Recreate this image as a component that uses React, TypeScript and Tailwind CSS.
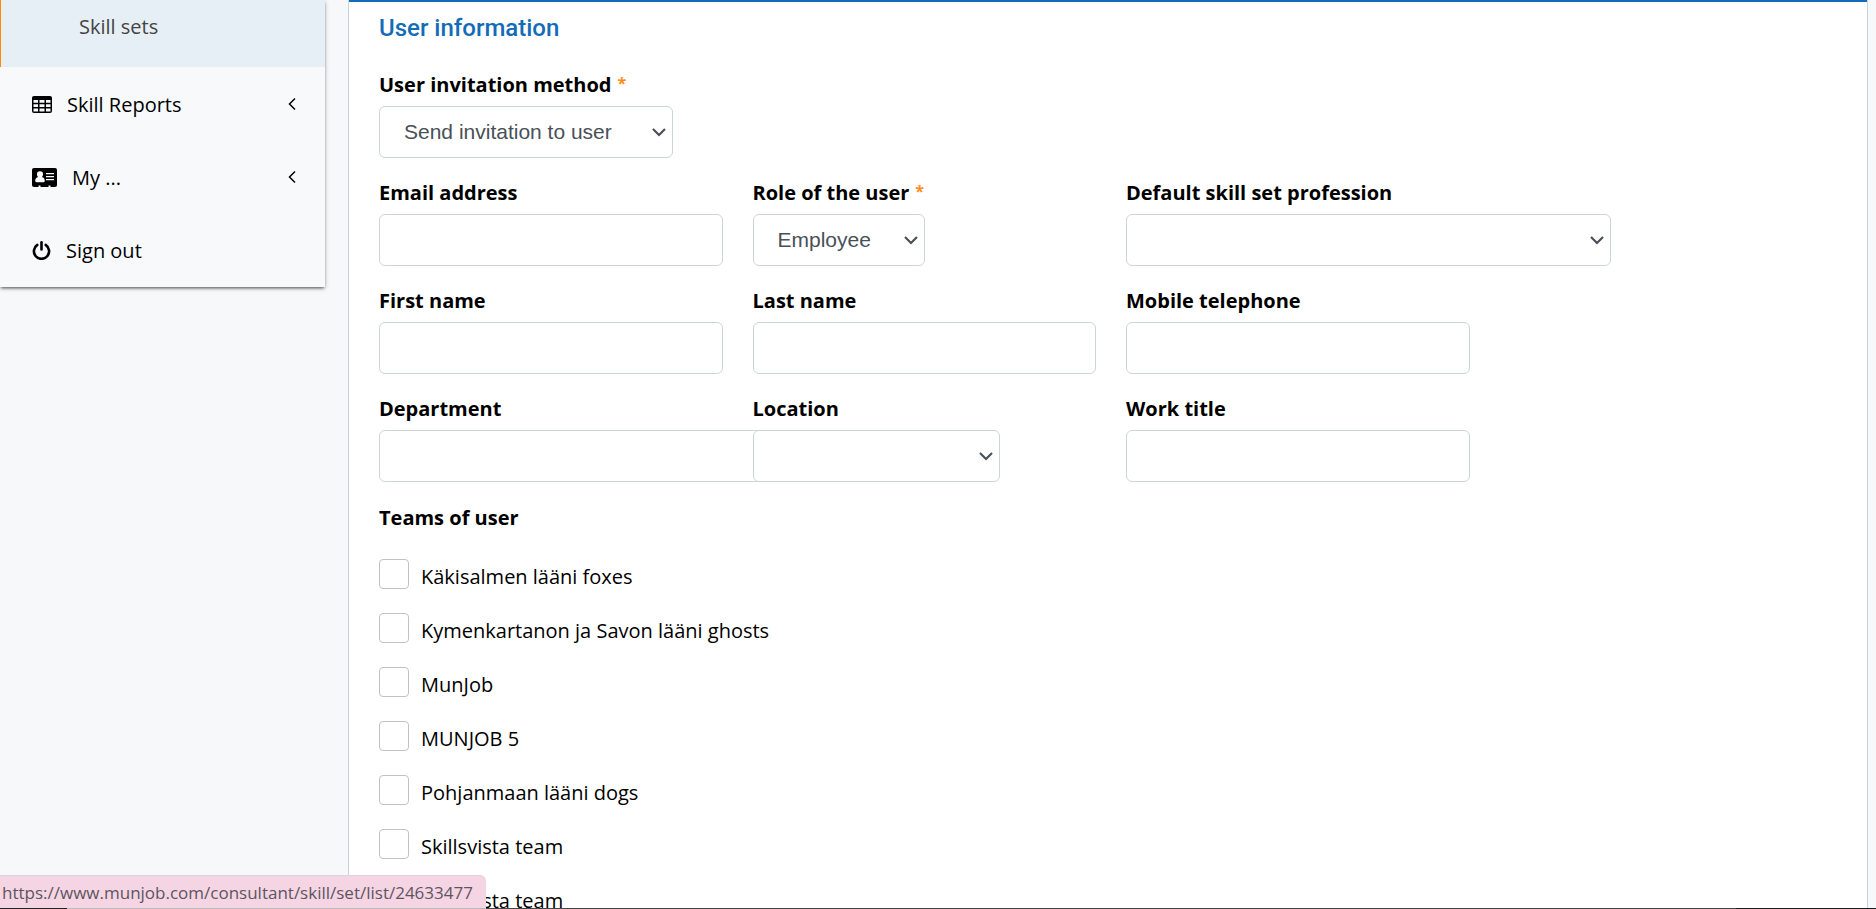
import type { ReactNode } from "react"

const teams = [
  "Käkisalmen lääni foxes",
  "Kymenkartanon ja Savon lääni ghosts",
  "MunJob",
  "MUNJOB 5",
  "Pohjanmaan lääni dogs",
  "Skillsvista team",
  "Skillsvista team",
]

const boxStyle = "h-[52px] rounded-md border border-[#ced4da] bg-white"

function TableIcon() {
  return (
    <svg className="h-[17px] w-5" viewBox="0 0 20 17">
      <rect width="20" height="17" rx="2" fill="black" />
      <g fill="#f7f9fb">
        <path d="M1.5 4h4.5v2.7H1.5zM7.5 4h5v2.7h-5zM14 4h4.5v2.7H14z" />
        <path d="M1.5 8.2h4.5v2.7H1.5zM7.5 8.2h5v2.7h-5zM14 8.2h4.5v2.7H14z" />
        <path d="M1.5 12.4h4.5v3H1.5zM7.5 12.4h5v3h-5zM14 12.4h4.5v3H14z" />
      </g>
    </svg>
  )
}

function CardIcon() {
  return (
    <svg className="h-[19px] w-[25px]" viewBox="0 0 25 19">
      <rect width="25" height="19" rx="2" fill="black" />
      <g fill="#f7f9fb">
        <path d="M8 3.2a3 3 0 0 1 3 3.2c0 1.1-.5 2-1.1 2.6 1.8.3 2.9 1.8 2.9 3.8 0 .8-.5 1.4-1.2 1.4H4.400c-.7 0-1.200-.6-1.200-1.400 0-2 1.100-3.500 2.900-3.800A3.500 3.500 0 0 1 5 6.400 3 3 0 0 1 8 3.200z" />
        <path d="M14 5h8v1.300h-8zM14 8h8v1.300h-8zM14 11h8v1.300h-8z" />
        <path d="M6.500 17.500h2V19h-2zM16.500 17.500h2V19h-2z" />
      </g>
    </svg>
  )
}

function PowerIcon() {
  return (
    <svg className="size-[19px]" viewBox="0 0 19 19" fill="none" stroke="black" strokeWidth="2.6" strokeLinecap="round">
      <path d="M5.300 3.900a7.600 7.600 0 1 0 8.400 0" />
      <path d="M9.500 1.400v7" />
    </svg>
  )
}

interface FieldProps {
  id: string
  label: string
  required?: boolean
  children: ReactNode
}

function Field({ id, label, required, children }: FieldProps) {
  return (
    <div>
      <label htmlFor={id} className="mb-1.5 flex gap-1.5 font-bold leading-[30px]">
        {label}
        {required && <span className="text-base leading-[26px] text-[#ff8c1a]">*</span>}
      </label>
      {children}
    </div>
  )
}

function TextField({ id, label, width = "w-full" }: { id: string; label: string; width?: string }) {
  return (
    <Field id={id} label={label}>
      <input id={id} type="text" className={`${boxStyle} ${width} block px-6`} />
    </Field>
  )
}

interface SelectFieldProps {
  id: string
  label: string
  options: string[]
  width: string
  required?: boolean
}

function SelectField({ id, label, options, width, required }: SelectFieldProps) {
  return (
    <Field id={id} label={label} required={required}>
      <div className={`relative ${width}`}>
        <select
          id={id}
          className={`${boxStyle} block w-full appearance-none pl-6 pr-7 font-['Liberation_Sans',Arial,sans-serif] text-[21px] text-[#495057]`}
        >
          {options.map((option) => (
            <option key={option}>{option}</option>
          ))}
        </select>
        <svg
          className="pointer-events-none absolute right-1.5 top-[19px] h-3.5 w-4 text-[#495057]"
          viewBox="0 0 16 14"
          fill="none"
          stroke="currentColor"
          strokeWidth="2.2"
        >
          <path d="M2 4l6 6 6-6" />
        </svg>
      </div>
    </Field>
  )
}

function MenuItem({ icon, label, submenu }: { icon: ReactNode; label: string; submenu?: boolean }) {
  return (
    <a href="#" className="flex h-[73px] items-center gap-[15px] pl-8 pr-7 pt-0.5">
      {icon}
      <span>{label}</span>
      {submenu && (
        <svg className="mb-0.5 ml-auto h-3.5 w-2.5" viewBox="0 0 10 14" fill="none" stroke="currentColor" strokeWidth="1.5">
          <path d="M8 1.500L2.500 7l5.500 5.500" />
        </svg>
      )}
    </a>
  )
}

export default function App() {
  return (
    <div className="flex h-screen items-start overflow-hidden bg-[#f6f8fa] font-['Open_Sans','Noto_Sans',sans-serif] text-xl text-black">
      {/* Sidebar */}
      <nav className="w-[325px] shrink-0 bg-[#f7f9fb] pb-px shadow-[0_2px_3px_-1px_rgba(0,0,0,0.6),0_1px_5px_rgba(0,0,0,0.2)]">
        <a href="#" className="flex h-[67px] items-start border-l border-[#ff8c00] bg-[#e6eff6] pl-[78px] pt-3 leading-[30px] text-[#444]">
          Skill sets
        </a>
        <MenuItem icon={<TableIcon />} label="Skill Reports" submenu />
        <MenuItem icon={<CardIcon />} label="My ..." submenu />
        <MenuItem icon={<PowerIcon />} label="Sign out" />
      </nav>

      {/* User form */}
      <main className="ml-[23px] mr-2 h-full flex-1 border-x border-[#c8d5dd] bg-white">
        <form className="border-t-2 border-[#146bb8] pl-[30px] pr-6">
          <h2 className="mb-[27px] pt-[11px] font-[Roboto,sans-serif] text-2xl font-medium leading-[30px] text-[#146bb8]">
            User information
          </h2>
          <div className="grid grid-cols-4 gap-x-[30px] gap-y-5">
            <div className="col-span-4">
              <SelectField id="method" label="User invitation method" options={["Send invitation to user"]} width="w-[294px]" required />
            </div>
            <TextField id="email" label="Email address" />
            <SelectField id="role" label="Role of the user" options={["Employee"]} width="w-[172px]" required />
            <div className="col-span-2">
              <SelectField id="profession" label="Default skill set profession" options={[""]} width="w-[485px]" />
            </div>
            <TextField id="first-name" label="First name" />
            <TextField id="last-name" label="Last name" />
            <TextField id="mobile" label="Mobile telephone" />
            <div className="col-start-1">
              <TextField id="department" label="Department" width="w-[400px]" />
            </div>
            <SelectField id="location" label="Location" options={[""]} width="w-[247px]" />
            <TextField id="work-title" label="Work title" />
          </div>

          <fieldset className="mt-[21px]">
            <legend className="mb-[26px] font-bold leading-[30px]">Teams of user</legend>
            <div className="flex flex-col gap-6">
              {teams.map((team, i) => (
                <label key={i} className="flex h-[30px] items-start gap-3">
                  <input type="checkbox" className="size-[30px] appearance-none rounded-sm border border-[#bfc3c9] bg-white" />
                  <span className="pt-[5px] leading-[26px]">{team}</span>
                </label>
              ))}
            </div>
          </fieldset>
        </form>
      </main>

      {/* Link address shown while hovering */}
      <div className="fixed bottom-0 left-0 flex h-[34px] w-[486px] items-center whitespace-nowrap rounded-tr-md border-t border-[#dcd3dc] bg-[#f5d5e3] pl-0.5 text-[17px] text-[#5c5560]">
        https://www.munjob.com/consultant/skill/set/list/24633477
      </div>

      {/* Taskbar edge */}
      <div className="fixed inset-x-0 bottom-0 flex h-px bg-[#454545]">
        <span className="w-[67px] bg-[#222]" />
        <span className="w-[419px] bg-[#bbb]" />
        <span className="ml-auto w-[140px] bg-[#1c1c1c]" />
      </div>
    </div>
  )
}
